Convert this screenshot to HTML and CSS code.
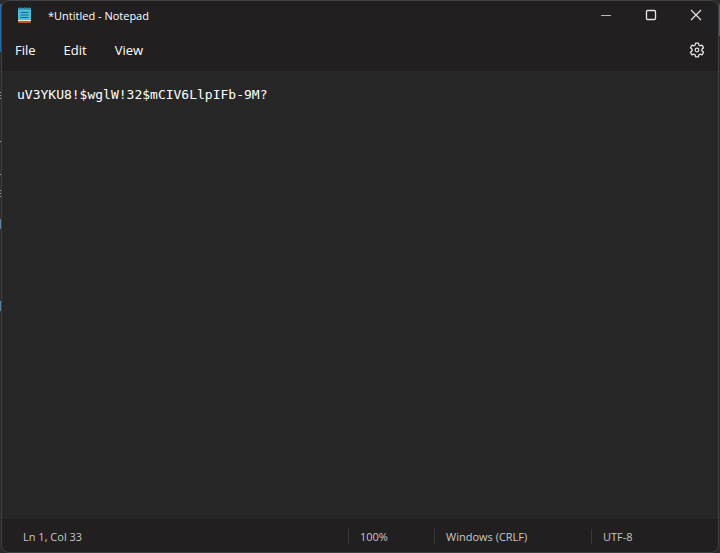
FILE: index.html
```
<!DOCTYPE html>
<html lang="en">

<head>
  <meta charset="UTF-8">
  <meta name="viewport" content="width=device-width, initial-scale=1">
  <title>*Untitled - Notepad</title>
  <link rel="stylesheet" href="styles.css">
</head>

<body>
  <div class="window">
    <header class="titlebar">
      <svg class="app-icon" width="13" height="16" viewBox="0 0 13 16" aria-hidden="true">
        <rect x="0" y="2" width="13" height="14" rx="1" fill="#b85c1c" />
        <rect x="0" y="13" width="13" height="1" fill="#f3e6d6" />
        <rect x="0" y="1" width="13" height="12" rx="1" fill="#4cbbdc" />
        <rect x="0" y="1" width="13" height="2" fill="#3aa0c0" />
        <path d="M1.5 0v2M4 0v2M6.5 0v2M9 0v2M11.5 0v2" stroke="#2b6f88" stroke-width="1" />
        <path d="M2.5 5.5h8M2.5 8h8M2.5 10.5h8" stroke="#14688f" stroke-width="1" />
      </svg>
      <h1 class="title">*Untitled - Notepad</h1>
      <div class="window-buttons">
        <button type="button" aria-label="Minimize">
          <svg width="12" height="12" viewBox="0 0 12 12"><path d="M1 6.5h10" stroke="#b8b8b8" /></svg>
        </button>
        <button type="button" aria-label="Maximize">
          <svg width="12" height="12" viewBox="0 0 12 12"><rect x="1.5" y="1.5" width="9" height="9" rx="1" stroke-width="1.3" /></svg>
        </button>
        <button type="button" aria-label="Close">
          <svg width="12" height="12" viewBox="0 0 12 12"><path d="M1 1l10 10M11 1L1 11" stroke-width="1.2" /></svg>
        </button>
      </div>
    </header>

    <nav class="menubar">
      <button type="button">File</button>
      <button type="button">Edit</button>
      <button type="button">View</button>
      <button type="button" class="settings" aria-label="Settings">
        <svg width="16" height="16" viewBox="0 0 16 16">
          <path d="M6.6 1.2h2.8l.5 2 1.1.6 2-.6 1.5 2.5-1.6 1.5v1.6l1.6 1.5-1.5 2.5-2-.6-1.1.6-.5 2H6.600l-.5-2-1.100-.6-2 .6-1.500-2.500 1.600-1.500V7.200L1.500 5.700 3 3.200l2 .6 1.100-.6z" stroke-width="1.3" stroke-linejoin="round" />
          <circle cx="8" cy="8" r="1.8" stroke-width="1.2" />
        </svg>
      </button>
    </nav>

    <textarea class="editor" aria-label="Text editor" spellcheck="false">uV3YKU8!$wglW!32$mCIV6LlpIFb-9M?</textarea>

    <footer class="statusbar">
      <span class="position">Ln 1, Col 33</span>
      <span>100%</span>
      <span>Windows (CRLF)</span>
      <span>UTF-8</span>
    </footer>
  </div>
</body>

</html>
```
FILE: styles.css
```
:root {
  --chrome: #211f20;
  --editor: #272727;
  --edge: #404040;
  --text: #fff;
  --muted: #c8c8c8;
  --desktop-blue: linear-gradient(#2567a0, #2567a0);
  --desktop-link: linear-gradient(#58809f, #58809f);
  --desktop-text: repeating-linear-gradient(#999 0 1px, #2b2b2b 1px 3px);
}

* {
  box-sizing: border-box;
}

body {
  margin: 0;
  height: 100vh;
  padding: 0 1px;
  font-family: "Open Sans", "Noto Sans", sans-serif;
  color: var(--text);
  /* desktop showing past the window edges */
  background:
    var(--desktop-blue) 0 4px / 2px 48px no-repeat,
    var(--desktop-blue) 100% 4px / 1px 32px no-repeat,
    var(--desktop-text) 0 92px / 1px 7px no-repeat,
    var(--desktop-text) 0 141px / 1px 1px no-repeat,
    var(--desktop-text) 0 174px / 1px 1px no-repeat,
    var(--desktop-text) 0 190px / 1px 7px no-repeat,
    var(--desktop-link) 0 219px / 1px 10px no-repeat,
    var(--desktop-link) 0 301px / 1px 10px no-repeat,
    #2b2b2b;
}

.window {
  display: flex;
  flex-direction: column;
  height: 100%;
  overflow: hidden;
  background: var(--chrome);
  border: 1px solid var(--edge);
  border-radius: 8px;
}

button {
  padding: 0;
  border: none;
  background: none;
  color: inherit;
  font: inherit;
}

svg {
  display: block;
}

button svg {
  margin: 0 auto;
  fill: none;
  stroke: #e6e6e6;
}

.titlebar {
  display: flex;
  align-items: center;
  height: 28px;
  padding-left: 16px;
}

.title {
  margin: 0 0 0 17px;
  font-size: 11px;
  font-weight: normal;
}

.window-buttons {
  display: flex;
  height: 100%;
  margin-left: auto;
}

.window-buttons button {
  width: 45px;
}

.menubar {
  display: flex;
  align-items: center;
  gap: 28px;
  height: 41px;
  padding: 0 13px;
  font-size: 13px;
}

.settings {
  margin-left: auto;
}

.editor {
  flex: 1;
  width: 100%;
  padding: 15px;
  border: none;
  border-top: 1px solid #1d1d1d;
  outline: none;
  resize: none;
  background: var(--editor);
  color: var(--text);
  font-family: "DejaVu Sans Mono", monospace;
  font-size: 13px;
  line-height: 18px;
}

.statusbar {
  display: grid;
  grid-template-columns: 1fr 86px 157px 127px;
  align-items: center;
  height: 33px;
  border-top: 1px solid #1d1d1d;
  color: var(--muted);
  font-size: 11px;
}

.statusbar span {
  padding-left: 11px;
  border-left: 1px solid #383838;
}

.statusbar .position {
  padding-left: 21px;
  border-left: none;
}
```
